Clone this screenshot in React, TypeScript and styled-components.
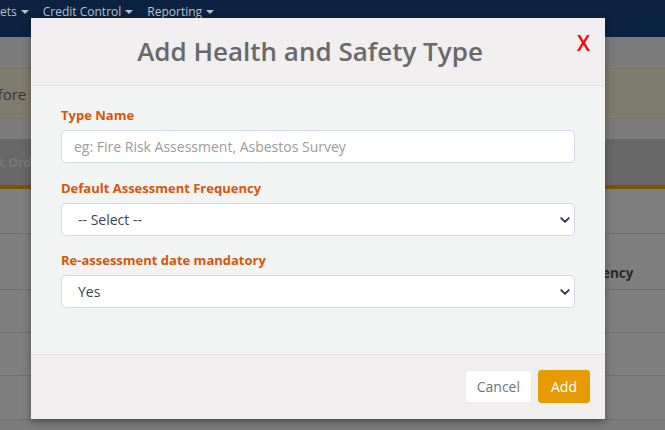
import React from 'react';
import styled, { createGlobalStyle } from 'styled-components';

const GlobalStyle = createGlobalStyle`
  html, body {
    margin: 0;
    padding: 0;
    width: 665px;
    height: 430px;
    overflow: hidden;
    background: #f6f6f6;
    font-family: 'Open Sans', 'Liberation Sans', sans-serif;
  }
  * { box-sizing: border-box; }
`;

const Screen = styled.div`
  position: relative;
  width: 665px;
  height: 430px;
  overflow: hidden;
`;

const Navbar = styled.nav`
  position: relative;
  z-index: 3;
  height: 37px;
  background: #0b2341;
  display: flex;
  align-items: flex-start;
  gap: 14px;
  padding-top: 1px;
  margin-left: -19px;
`;

const NavItem = styled.span`
  display: flex;
  align-items: center;
  gap: 4px;
  font-size: 12px;
  line-height: 22px;
  color: #b9c1cc;
  white-space: nowrap;
`;

const Caret = styled.span`
  width: 0;
  height: 0;
  border-left: 4px solid transparent;
  border-right: 4px solid transparent;
  border-top: 4px solid #b9c1cc;
`;

const PageBody = styled.div`
  display: flex;
  flex-direction: column;
`;

const Gap = styled.div<{ h: number }>`
  height: ${({ h }) => h}px;
`;

const Alert = styled.div`
  height: 51px;
  background: #fdf6df;
  border-top: 1px solid #f7ecc4;
  border-bottom: 1px solid #f7ecc4;
  display: flex;
  align-items: center;
  font-size: 15px;
  color: #7b6b49;
  text-indent: -20px;
  white-space: nowrap;
`;

const Tabs = styled.div`
  height: 46px;
  background: #d1d1d1;
  display: flex;
  align-items: center;
  font-size: 12.5px;
  font-weight: 600;
  color: #f4f4f4;
  text-indent: -27px;
  white-space: nowrap;
  border-bottom: 4px solid #ffa400;
  box-sizing: content-box;
`;

const Row = styled.div<{ h: number }>`
  height: ${({ h }) => h}px;
  background: #fff;
  border-bottom: 1px solid #e0e0e0;
  display: flex;
  align-items: flex-end;
  padding: 0 0 7px 563px;
  font-size: 13.5px;
  font-weight: 700;
  color: #555;
  white-space: nowrap;
`;

const Backdrop = styled.div`
  position: absolute;
  top: 37px;
  left: 0;
  right: 0;
  bottom: 0;
  background: rgba(0, 0, 0, 0.5);
  z-index: 2;
`;

const Modal = styled.div`
  position: absolute;
  top: 18px;
  left: 31px;
  width: 574px;
  z-index: 4;
  background: #f2f3f3;
  box-shadow: 0 3px 8px rgba(0, 0, 0, 0.35);
  display: flex;
  flex-direction: column;
`;

const Header = styled.div`
  position: relative;
  height: 68px;
  background: #f0eeef;
  border-bottom: 1px solid #e2e3e3;
  display: flex;
  align-items: center;
  justify-content: center;
  padding-right: 16px;
`;

const Title = styled.h2`
  margin: 0 0 1px 0;
  font-size: 26px;
  font-weight: 600;
  color: #696969;
`;

const Close = styled.button`
  position: absolute;
  top: 11px;
  right: 15px;
  border: 0 none;
  background: transparent;
  padding: 0;
  font-family: 'Open Sans', 'Liberation Sans', sans-serif;
  font-size: 21px;
  font-weight: 600;
  color: #ff0000;
  cursor: pointer;
`;

const Body = styled.div`
  padding: 19px 30px 46px;
  display: flex;
  flex-direction: column;
  gap: 14.5px;
`;

const Group = styled.div`
  display: flex;
  flex-direction: column;
`;

const Label = styled.label`
  font-size: 13px;
  line-height: 20px;
  font-weight: 700;
  color: #d4570b;
  margin-bottom: 5px;
`;

const Input = styled.input`
  height: 33px;
  width: 100%;
  border: 1px solid #cfd9e7;
  border-radius: 5px;
  background: #fff;
  padding: 0 12px;
  font-family: 'Open Sans', 'Liberation Sans', sans-serif;
  font-size: 14px;
  color: #333;
  outline: none;
  &::placeholder {
    color: #9c9c9c;
  }
`;

const SelectWrap = styled.div`
  position: relative;
`;

const Select = styled.select`
  height: 33px;
  width: 100%;
  appearance: none;
  border: 1px solid #cfd9e7;
  border-radius: 5px;
  background: #fff;
  padding: 0 36px 0 16px;
  font-family: 'Open Sans', 'Liberation Sans', sans-serif;
  font-size: 14px;
  color: #3a4450;
  outline: none;
`;

const Chevron = styled.svg`
  position: absolute;
  right: 4px;
  top: 11px;
  pointer-events: none;
`;

const Footer = styled.div`
  height: 65px;
  background: #f0eeef;
  border-top: 1px solid #e2e3e3;
  display: flex;
  justify-content: flex-end;
  align-items: flex-start;
  gap: 6px;
  padding: 15px 15px 0 0;
`;

const Button = styled.button<{ primary?: boolean }>`
  height: 33px;
  padding: 0 ${({ primary }) => (primary ? '12px' : '11px')};
  border: 1px solid ${({ primary }) => (primary ? '#e69b00' : '#ebebeb')};
  border-radius: 3px;
  background: ${({ primary }) => (primary ? '#e69b00' : '#fff')};
  color: ${({ primary }) => (primary ? '#fff' : '#6f747a')};
  font-family: 'Open Sans', 'Liberation Sans', sans-serif;
  font-size: 14px;
  cursor: pointer;
`;

const ChevronIcon = () => (
  <Chevron width='12' height='12' viewBox='0 0 16 16'>
    <path
      d='M3 5.5l5 5 5-5'
      fill='none'
      stroke='#343a40'
      strokeWidth='2.6'
      strokeLinecap='round'
      strokeLinejoin='round'
    />
  </Chevron>
);

export default function App(): JSX.Element {
  return (
    <Screen>
      <GlobalStyle />
      <Navbar>
        <NavItem>
          Assets <Caret />
        </NavItem>
        <NavItem>
          Credit Control <Caret />
        </NavItem>
        <NavItem>
          Reporting <Caret />
        </NavItem>
      </Navbar>
      <PageBody>
        <Gap h={31} />
        <Alert>before making changes</Alert>
        <Gap h={20} />
        <Tabs>Work Orders</Tabs>
        <Row h={45} />
        <Row h={56}>Frequency</Row>
        <Row h={43} />
        <Row h={43} />
        <Row h={44} />
      </PageBody>
      <Backdrop />
      <Modal>
        <Header>
          <Title>Add Health and Safety Type</Title>
          <Close>X</Close>
        </Header>
        <Body>
          <Group>
            <Label htmlFor='typeName'>Type Name</Label>
            <Input
              id='typeName'
              type='text'
              placeholder='eg: Fire Risk Assessment, Asbestos Survey'
            />
          </Group>
          <Group>
            <Label htmlFor='frequency'>Default Assessment Frequency</Label>
            <SelectWrap>
              <Select id='frequency' defaultValue=''>
                <option value=''>-- Select --</option>
                <option value='6'>6 Months</option>
                <option value='12'>12 Months</option>
              </Select>
              <ChevronIcon />
            </SelectWrap>
          </Group>
          <Group>
            <Label htmlFor='mandatory'>Re-assessment date mandatory</Label>
            <SelectWrap>
              <Select id='mandatory' defaultValue='yes'>
                <option value='yes'>Yes</option>
                <option value='no'>No</option>
              </Select>
              <ChevronIcon />
            </SelectWrap>
          </Group>
        </Body>
        <Footer>
          <Button>Cancel</Button>
          <Button primary>Add</Button>
        </Footer>
      </Modal>
    </Screen>
  );
}
